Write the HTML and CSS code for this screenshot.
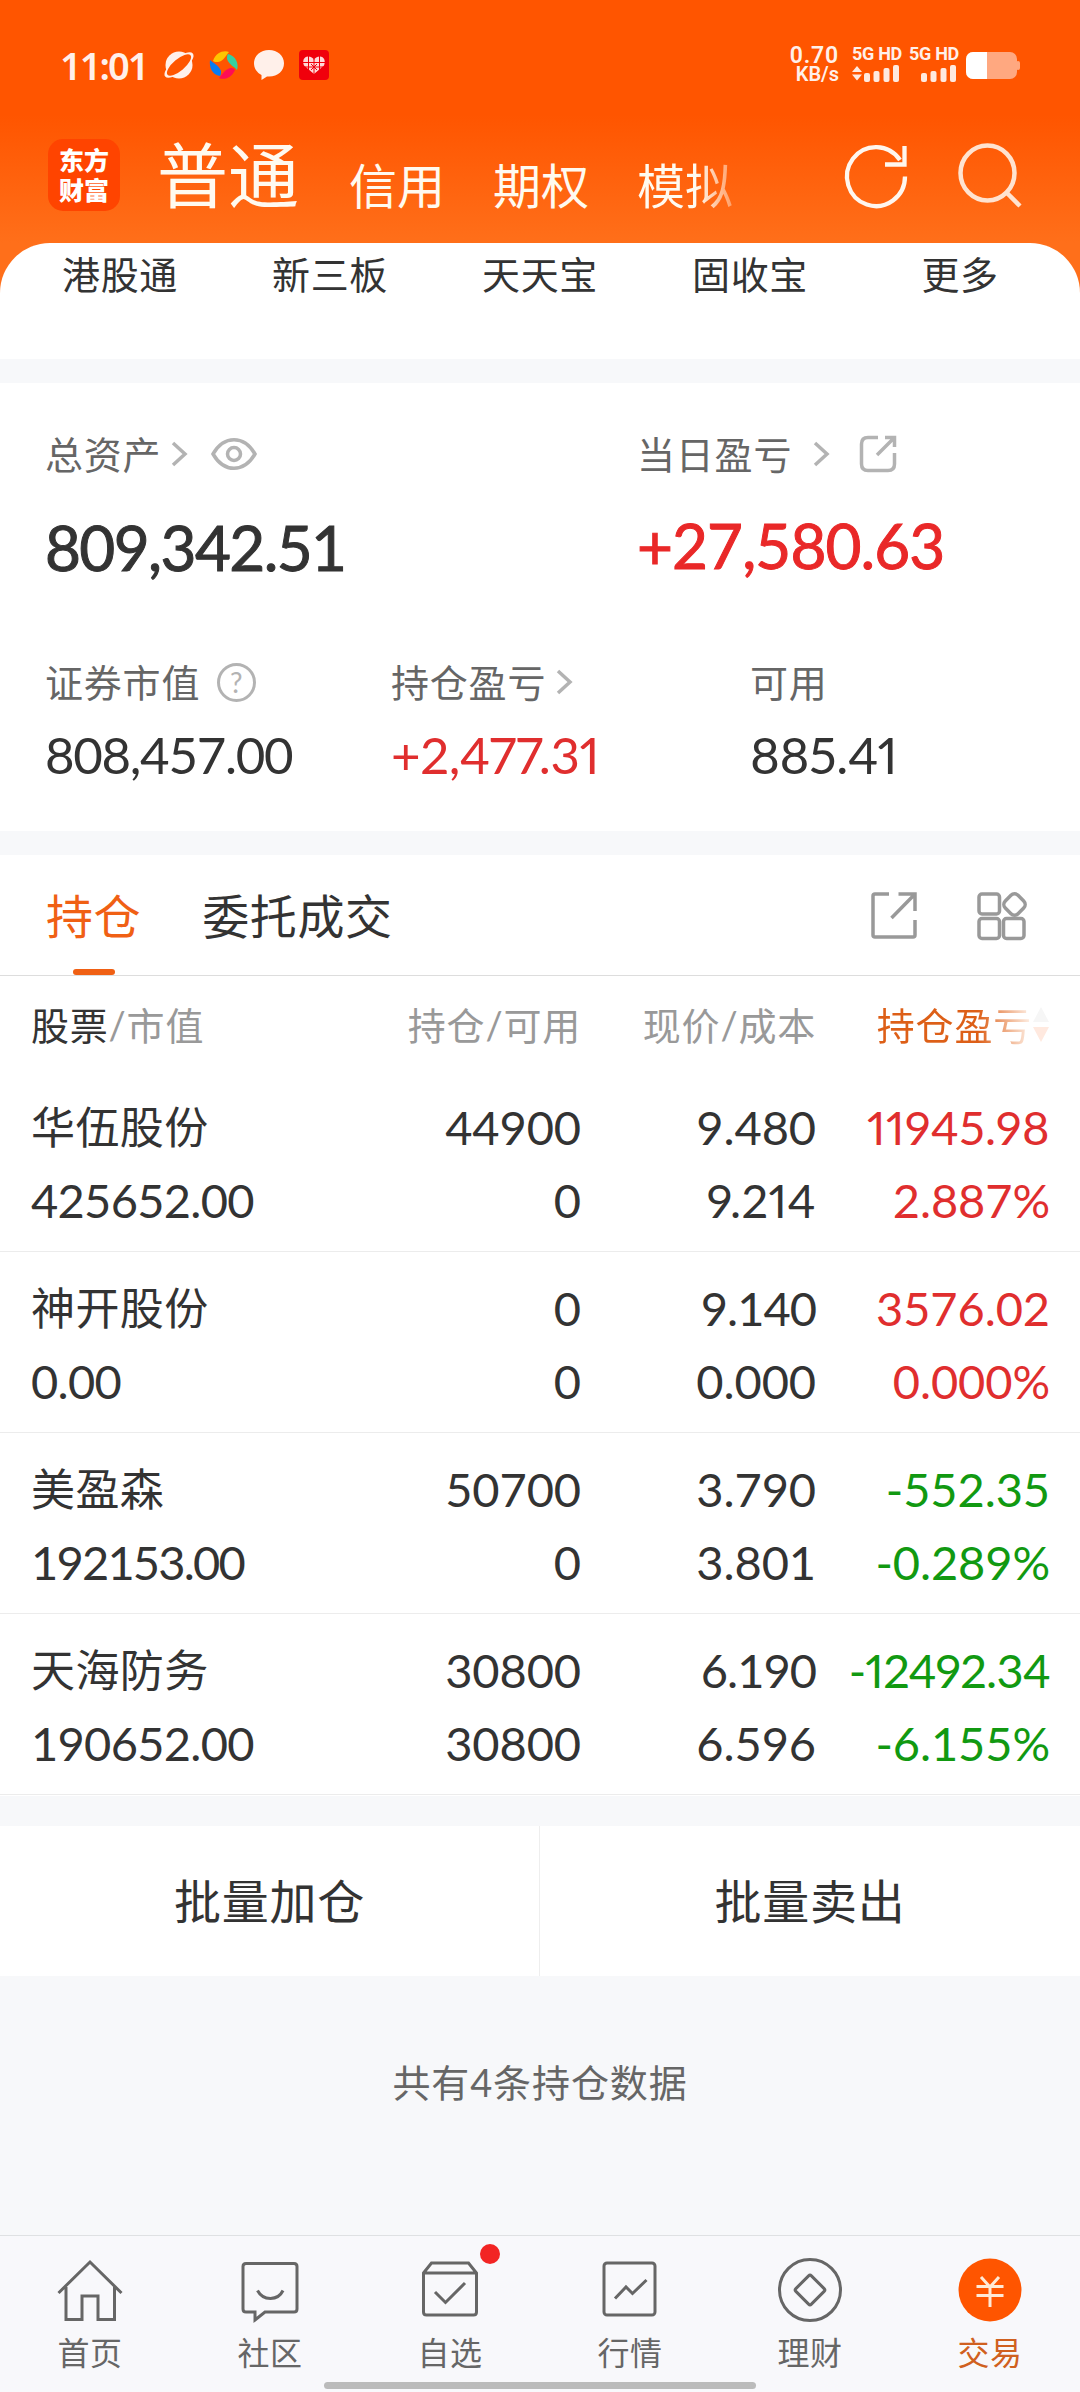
FILE: index.html
```html
<!DOCTYPE html>
<html lang="zh-CN">
<head>
  <meta charset="UTF-8">
  <meta name="viewport" content="width=device-width, initial-scale=1.0">
  <title>交易 - 持仓</title>
  <link rel="stylesheet" href="styles.css">
</head>
<body>
<div class="app">

  <!-- Header -->
  <header class="top">
    <div class="status-bar">
      <span class="time">11:01</span>
      <div class="status-icons">
        <svg width="30" height="30" viewBox="0 0 30 30">
          <circle cx="15" cy="15" r="13.500" fill="#fff0ea"/>
          <ellipse cx="15" cy="15" rx="18" ry="7" transform="rotate(-40 15 15)" fill="#fff0ea"/>
          <ellipse cx="15" cy="15" rx="15" ry="5.800" transform="rotate(-40 15 15)" fill="#ff5500"/>
        </svg>
        <svg width="30" height="30" viewBox="0 0 30 30">
          <path d="M4 11C7 2 15 0 20 2C17 5 15 11 9 12C7 12 5 12 4 11Z" fill="#ffc400"/>
          <path d="M19 4C27 6 30 14 28 20C26 17 20 15 18 9C18 7 18 5 19 4Z" fill="#35d0a0"/>
          <path d="M26 20C22 29 14 30 10 28C13 25 15 20 21 18C23 18 25 18 26 20Z" fill="#ff0d55"/>
          <path d="M11 26C3 25 0 17 1 10C4 13 10 15 12 21C12 23 12 25 11 26Z" fill="#0a7cf0"/>
        </svg>
        <svg width="30" height="30" viewBox="0 0 30 30">
          <path d="M15 0C6.500 0 0 5.800 0 13.300C0 18.500 3 22.700 7.500 25L7.500 30L13 26.500C23 27.500 30 21.500 30 13.300C30 5.800 23.500 0 15 0Z" fill="#fff0ea"/>
        </svg>
        <svg width="30" height="30" viewBox="0 0 30 30">
          <rect width="30" height="30" rx="4" fill="#f0000c"/>
          <path d="M15 24L5 15.500C3 11 5 6.500 9 6.500C12 6.500 14 8 15 10C16 8 18 6.500 21 6.500C25 6.500 27 11 25 15.500Z" fill="#ffd9d9"/>
          <path d="M4 12.500H26M6 17H24M9.500 6V21M20.500 6V21M15 9V25M12 14L18 20M18 14L12 20" stroke="#f0000c" stroke-width="1" fill="none"/>
        </svg>
      </div>
      <div class="status-right">
        <div class="net-speed"><b>0.70</b><span>KB/s</span></div>
        <div class="signal">
          <span>5G HD</span>
          <svg width="48" height="17" viewBox="0 0 48 17" fill="#ffe9df">
            <path d="M0 7L5 1L10 7ZM0 9.500L5 15.500L10 9.500Z"/>
            <rect x="12" y="8" width="6" height="9" rx="2"/>
            <rect x="21.500" y="6" width="6" height="11" rx="2"/>
            <rect x="31.500" y="3" width="6" height="14" rx="2"/>
            <rect x="41" y="0" width="6" height="17" rx="2"/>
          </svg>
        </div>
        <div class="signal">
          <span>5G HD</span>
          <svg width="48" height="17" viewBox="0 0 48 17" fill="#ffe9df">
            <rect x="12" y="8" width="6" height="9" rx="2"/>
            <rect x="21.500" y="6" width="6" height="11" rx="2"/>
            <rect x="31.500" y="3" width="6" height="14" rx="2"/>
            <rect x="41" y="0" width="6" height="17" rx="2"/>
          </svg>
        </div>
        <svg class="battery" width="54" height="27" viewBox="0 0 54 27">
          <rect width="51" height="27" rx="7" fill="#ffa880"/>
          <rect x="50" y="9" width="4" height="9" rx="2" fill="#ffa880"/>
          <path d="M7 0H21V27H7A7 7 0 0 1 0 20V7A7 7 0 0 1 7 0Z" fill="#fff"/>
        </svg>
      </div>
    </div>

    <div class="nav-bar">
      <div class="logo"><span>东方</span><span>财富</span></div>
      <div class="accounts">
        <span class="account active">普通</span>
        <span class="account">信用</span>
        <span class="account">期权</span>
        <span class="account fade">模拟</span>
      </div>
      <div class="nav-actions">
        <svg width="64" height="66" viewBox="0 0 64 66" fill="none" stroke="#fff6ee" stroke-width="4.300">
          <path d="M60 33.500A29 29.500 0 1 1 55 17"/>
          <path d="M59.500 3V21.500H40"/>
        </svg>
        <svg width="64" height="66" viewBox="0 0 64 66" fill="none" stroke="#ffe3d0" stroke-width="4.500">
          <ellipse cx="29.500" cy="30" rx="27" ry="27.500"/>
          <path d="M48 49L62 63"/>
        </svg>
      </div>
    </div>
  </header>

  <!-- Shortcuts -->
  <nav class="shortcuts">
    <span>港股通</span>
    <span>新三板</span>
    <span>天天宝</span>
    <span>固收宝</span>
    <span>更多</span>
  </nav>

  <!-- Assets -->
  <section class="assets">
    <div class="asset-main">
      <div class="asset">
        <div class="label">总资产
          <svg class="chev near" width="16" height="26" viewBox="0 0 16 26"><path d="M2 2L14 13L2 24"/></svg>
          <svg class="eye" width="46" height="32" viewBox="0 0 46 32">
            <path d="M2 16C13 -3 33 -3 44 16C33 35 13 35 2 16Z"/>
            <circle cx="23" cy="16" r="6.500"/>
          </svg>
        </div>
        <div class="value big">809,342.51</div>
      </div>
      <div class="asset">
        <div class="label">当日盈亏
          <svg class="chev far" width="16" height="26" viewBox="0 0 16 26"><path d="M2 2L14 13L2 24"/></svg>
          <svg class="share" width="38" height="38" viewBox="0 0 38 38">
            <path d="M19 2.500H9Q2.500 2.500 2.500 9V29Q2.500 35.500 9 35.500H29Q35.500 35.500 35.500 29V18"/>
            <path d="M26 2.500H35.500V12M35 3L18 20"/>
          </svg>
        </div>
        <div class="value big up profit">+27,580.63</div>
      </div>
    </div>
    <div class="asset-sub">
      <div class="asset">
        <div class="label">证券市值 <span class="help">?</span></div>
        <div class="value">808,457.00</div>
      </div>
      <div class="asset">
        <div class="label">持仓盈亏
          <svg class="chev near" width="16" height="26" viewBox="0 0 16 26"><path d="M2 2L14 13L2 24"/></svg>
        </div>
        <div class="value up prop">+2,477.31</div>
      </div>
      <div class="asset">
        <div class="label">可用</div>
        <div class="value prop">885.41</div>
      </div>
    </div>
  </section>

  <!-- Holdings -->
  <section class="holdings">
    <div class="tabs">
      <span class="tab active">持仓</span>
      <span class="tab">委托成交</span>
      <div class="tab-actions">
        <svg width="46" height="48" viewBox="0 0 46 48">
          <path d="M18 2H4Q2 2 2 4V43Q2 45 4 45H42Q44 45 44 43V28"/>
          <path d="M27.500 2H44V19M44 2L20.500 26"/>
        </svg>
        <svg width="50" height="48" viewBox="0 0 50 48">
          <rect x="2" y="2" width="20.500" height="20" rx="3"/>
          <rect x="2" y="26.500" width="20.500" height="20" rx="3"/>
          <rect x="26.500" y="26.500" width="20.500" height="20" rx="3"/>
          <rect x="28.500" y="3.500" width="18" height="18" rx="5" transform="rotate(45 37.500 12.500)"/>
        </svg>
      </div>
    </div>

    <div class="row head">
      <span><em>股票</em>/市值</span>
      <span>持仓/可用</span>
      <span>现价/成本</span>
      <span class="sort"><span class="sort-text">持仓盈亏</span>
        <svg width="18" height="36" viewBox="0 0 18 36">
          <path d="M1 15L9 0L17 15Z" fill="#f6f6f6"/>
          <path d="M1 20L9 35L17 20Z" fill="#ffe9df"/>
        </svg>
      </span>
    </div>

    <div class="row">
      <span class="name">华伍股份</span><span>44900</span><span>9.480</span><span class="up prop">11945.98</span>
      <span class="amount">425652.00</span><span>0</span><span class="prop">9.214</span><span class="up">2.887%</span>
    </div>
    <div class="row">
      <span class="name">神开股份</span><span>0</span><span class="tight">9.140</span><span class="up">3576.02</span>
      <span class="amount">0.00</span><span>0</span><span>0.000</span><span class="up">0.000%</span>
    </div>
    <div class="row">
      <span class="name">美盈森</span><span>50700</span><span>3.790</span><span class="down">-552.35</span>
      <span class="amount tight">192153.00</span><span>0</span><span>3.801</span><span class="down">-0.289%</span>
    </div>
    <div class="row">
      <span class="name">天海防务</span><span>30800</span><span class="tight">6.190</span><span class="down prop tight">-12492.34</span>
      <span class="amount">190652.00</span><span>30800</span><span>6.596</span><span class="down">-6.155%</span>
    </div>
  </section>

  <div class="batch">
    <button>批量加仓</button>
    <button>批量卖出</button>
  </div>

  <p class="summary">共有4条持仓数据</p>

  <!-- Bottom tabs -->
  <footer class="tabbar">
    <div class="tabbar-item">
      <svg width="66" height="66" viewBox="0 0 66 66">
        <path d="M1.500 35L33 4L64.500 35M9 29V61.500H25V38H41V61.500H57.500V29"/>
      </svg>
      <span>首页</span>
    </div>
    <div class="tabbar-item">
      <svg width="66" height="66" viewBox="0 0 66 66">
        <path d="M9 5.500H57Q60 5.500 60 8.500V51Q60 54 57 54H28L18 62V54H9Q6 54 6 51V8.500Q6 5.500 9 5.500Z"/>
        <path d="M20.500 32.500C26 43 41 43 46 32.500"/>
      </svg>
      <span>社区</span>
    </div>
    <div class="tabbar-item">
      <svg width="66" height="66" viewBox="0 0 66 66">
        <path d="M6.500 15L14.500 5H51.500L59.500 15V54Q59.500 57 56.500 57H9.500Q6.500 57 6.500 54ZM6.500 15H59.500"/>
        <path d="M18 34L28.500 44.500L48 25"/>
      </svg>
      <span>自选</span>
      <i class="dot"></i>
    </div>
    <div class="tabbar-item">
      <svg width="66" height="66" viewBox="0 0 66 66">
        <rect x="7" y="5" width="51" height="52" rx="3"/>
        <path d="M18 40.500L29 29L35.500 35.500L49.500 22"/>
      </svg>
      <span>行情</span>
    </div>
    <div class="tabbar-item">
      <svg width="66" height="66" viewBox="0 0 66 66">
        <circle cx="33" cy="32" r="30.500"/>
        <rect x="22" y="21" width="22" height="22" rx="2" transform="rotate(45 33 32)"/>
      </svg>
      <span>理财</span>
    </div>
    <div class="tabbar-item active">
      <svg width="66" height="66" viewBox="0 0 66 66">
        <circle cx="33" cy="32" r="31.500" fill="#ff5500" stroke="none"/>
        <path d="M24 19L33 29L42 19M19.500 28.500H46.500M19.500 37.500H46.500M33 28V49" stroke="#ffe9d6"/>
      </svg>
      <span>交易</span>
    </div>
    <div class="home-indicator"></div>
  </footer>
</div>
</body>
</html>
```
FILE: styles.css
```css
* { box-sizing: border-box; }

body {
  margin: 0;
  background: #f7f8fa;
  color: #333;
  font-family: Lato, "Noto Sans CJK SC", sans-serif;
  font-variant-numeric: tabular-nums;
}

svg { display: block; flex: none; overflow: visible; }

.app {
  width: 1080px;
  height: 2392px;
  display: flex;
  flex-direction: column;
  overflow: hidden;
}

/* header */
.top {
  height: 303px;
  flex: none;
  background: linear-gradient(#ff5500 0, #ff5500 115px, #ff6f1a 243px);
}

.status-bar {
  height: 130px;
  display: flex;
  align-items: center;
  padding: 0 60px 0 60px;
  color: #fff0ea;
}
.time {
  width: 104px;
  font: 600 38px/40px "Noto Sans", sans-serif;
  letter-spacing: -2px;
}
.status-icons { display: flex; gap: 15px; }
.status-right {
  display: flex;
  align-items: center;
  margin-left: auto;
  gap: 10px;
}
.net-speed, .signal {
  display: flex;
  flex-direction: column;
  font-family: Roboto, sans-serif;
  font-weight: 700;
}
.net-speed { align-items: flex-end; margin-right: 3px; }
.net-speed b { font-size: 23px; line-height: 19px; font-weight: 600; letter-spacing: 0.8px; }
.net-speed span { font-size: 20px; line-height: 19px; font-weight: 600; }
.signal { width: 47px; gap: 3px; margin-top: -2px; }
.signal span {
  font-size: 18px;
  line-height: 16px;
  white-space: nowrap;
  letter-spacing: -0.3px;
}

.nav-bar {
  display: flex;
  height: 90px;
  padding: 0 58px 0 48px;
}
.logo {
  display: flex;
  flex-direction: column;
  width: 72px;
  height: 72px;
  margin-top: 9px;
  padding-top: 5px;
  border-radius: 15px;
  background: #ff4400;
  color: #fff;
  text-align: center;
  font: 900 25px/30px "Noto Sans CJK SC", sans-serif;
}
.accounts {
  display: flex;
  align-items: flex-start;
  margin-left: 37px;
  color: #fffaf0;
}
.account {
  font-size: 48px;
  line-height: 112px;
  margin-right: 48px;
}
.account.active {
  font-size: 71px;
  line-height: 90px;
  margin-right: 50px;
}
.account.fade {
  margin-right: 0;
  background: linear-gradient(90deg, #fffaf0 62%, rgba(255, 240, 225, 0.4));
  -webkit-background-clip: text;
  color: transparent;
}
.nav-actions {
  display: flex;
  gap: 49px;
  margin: 13px 0 0 auto;
}

/* shortcuts */
.shortcuts {
  height: 116px;
  flex: none;
  margin-top: -60px;
  padding: 9px 15px 0;
  display: grid;
  grid-template-columns: repeat(5, 1fr);
  background: #fff;
  border-radius: 50px 50px 0 0;
  text-align: center;
  font-size: 38px;
  line-height: 44px;
  letter-spacing: 0.6px;
}

/* assets */
.assets {
  height: 448px;
  flex: none;
  margin-top: 24px;
  padding: 47px 45px 0;
  background: #fff;
}
.asset-main {
  display: grid;
  grid-template-columns: 592px 1fr;
  height: 228px;
}
.asset-sub {
  display: grid;
  grid-template-columns: 346px 359px 1fr;
}
.label {
  display: flex;
  align-items: center;
  height: 48px;
  color: #666;
  font-size: 38px;
  line-height: 48px;
  letter-spacing: 0.8px;
}
.label svg {
  fill: none;
  stroke: #b3b3b3;
  stroke-width: 3.5;
}
.chev.near { margin-left: 10px; }
.chev.far { margin-left: 21px; }
.eye { margin-left: 24px; }
.share { margin-left: 30px; }
.help {
  width: 39px;
  height: 39px;
  margin-left: 17px;
  border: 3px solid #b3b3b3;
  border-radius: 50%;
  color: #b3b3b3;
  text-align: center;
  font-size: 28px;
  line-height: 32px;
}
.value {
  margin-top: 19px;
  font-size: 51px;
  line-height: 60px;
  letter-spacing: -1.3px;
}
.value.prop { letter-spacing: -0.4px; }
.value.big {
  margin-top: 33px;
  font-size: 62px;
  line-height: 72px;
  letter-spacing: -1.6px;
  -webkit-text-stroke: 1px currentColor;
}
.up { color: #e02e2e; }
.down { color: #119911; }
.value.profit {
  color: #e92828;
  margin-top: 31px;
  letter-spacing: -0.9px;
}

/* holdings */
.holdings {
  height: 941px;
  flex: none;
  margin-top: 24px;
  background: #fff;
}
.tabs {
  height: 121px;
  display: flex;
  padding: 0 53px 0 46px;
  border-bottom: 1px solid #ddd;
  font-size: 47px;
  line-height: 122px;
  letter-spacing: 0.6px;
}
.tab { margin-right: 61px; }
.tab.active { color: #f06014; }
.tab.active::after {
  content: "";
  display: block;
  width: 42px;
  height: 6px;
  margin: -8px auto 0;
  border-radius: 3px;
  background: #f06014;
}
.tab-actions {
  display: flex;
  gap: 60px;
  margin: 37px 0 0 auto;
}
.tab-actions svg {
  fill: none;
  stroke: #999;
  stroke-width: 3.5;
}

.row {
  height: 181px;
  display: grid;
  grid-template-columns: 300px 250px 235px 234px;
  grid-template-rows: 73px 73px;
  padding: 19px 30px 0 31px;
  border-bottom: 1px solid #ececec;
  font-size: 47px;
  line-height: 74px;
  letter-spacing: -0.1px;
  text-align: right;
  white-space: nowrap;
}
.row > span:nth-child(4n + 1) { text-align: left; }
.row .name { font-size: 44px; letter-spacing: 0.4px; }
.row.head {
  height: 95px;
  grid-template-rows: 94px;
  padding-top: 2px;
  border: none;
  color: #999;
  font-size: 38px;
  line-height: 94px;
  letter-spacing: 0.8px;
}
.row.head em { color: #333; font-style: normal; }
.row .amount { letter-spacing: -0.7px; }

/* figures with a narrow "1" */
.prop {
  font-variant-numeric: proportional-nums;
}
.row .prop { letter-spacing: 0.4px; }
.row .tight { letter-spacing: -1px; }
.row .amount.tight { letter-spacing: -1.8px; }
.row .prop.tight { letter-spacing: -0.8px; }

.sort {
  display: flex;
  align-items: center;
  justify-content: flex-end;
}
.sort-text {
  background: linear-gradient(90deg, #dd5f17 65%, #fff3ea);
  -webkit-background-clip: text;
  color: transparent;
}

/* batch actions */
.batch {
  height: 150px;
  flex: none;
  margin-top: 30px;
  display: grid;
  grid-template-columns: 539px 541px;
  background: #fff;
}
.batch button {
  padding: 0 0 5px;
  border: none;
  background: none;
  color: #333;
  font: 47px "Noto Sans CJK SC", sans-serif;
  letter-spacing: 0.8px;
}
.batch button + button { border-left: 1px solid #eee; }

.summary {
  margin: 82px 0 0;
  color: #666;
  text-align: center;
  font-size: 38px;
  line-height: 48px;
  letter-spacing: 0.9px;
}

/* bottom tabs */
.tabbar {
  position: relative;
  height: 157px;
  flex: none;
  margin-top: auto;
  display: grid;
  grid-template-columns: repeat(6, 180px);
  border-top: 1px solid #dfe1e3;
  background: #f8f8fb;
}
.tabbar-item {
  position: relative;
  display: flex;
  flex-direction: column;
  align-items: center;
  padding-top: 22px;
  color: #666;
  font-size: 32px;
  line-height: 40px;
  letter-spacing: 0.6px;
}
.tabbar-item svg {
  margin-bottom: 9px;
  fill: none;
  stroke: #666;
  stroke-width: 3;
}
.tabbar-item.active { color: #d06020; }
.dot {
  position: absolute;
  top: 8px;
  left: 120px;
  width: 20px;
  height: 20px;
  border-radius: 50%;
  background: #f22424;
}
.home-indicator {
  position: absolute;
  left: 324px;
  bottom: 3px;
  width: 432px;
  height: 7px;
  border-radius: 4px;
  background: #bbb;
}
```
